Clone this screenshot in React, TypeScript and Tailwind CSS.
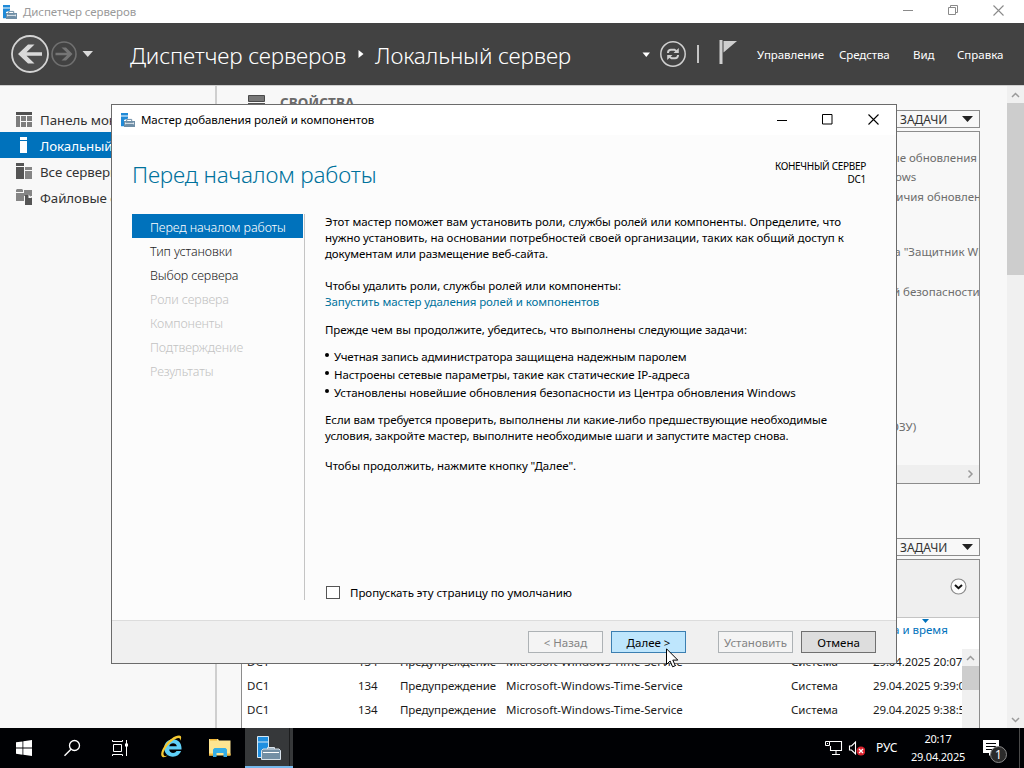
import type { ReactNode } from 'react';

const navItems = [
  { label: 'Перед началом работы', state: 'active' },
  { label: 'Тип установки', state: 'enabled' },
  { label: 'Выбор сервера', state: 'enabled' },
  { label: 'Роли сервера', state: 'disabled' },
  { label: 'Компоненты', state: 'disabled' },
  { label: 'Подтверждение', state: 'disabled' },
  { label: 'Результаты', state: 'disabled' },
];

const navStyles: Record<string, string> = {
  active: 'bg-[#0072bc] text-white',
  enabled: 'text-[#1e1e1e]',
  disabled: 'text-[#c2c2c2]',
};

const events = [
  { server: 'DC1', id: '134', level: 'Предупреждение', source: 'Microsoft-Windows-Time-Service', log: 'Система', date: '29.04.2025 20:07:05' },
  { server: 'DC1', id: '134', level: 'Предупреждение', source: 'Microsoft-Windows-Time-Service', log: 'Система', date: '29.04.2025 9:39:02' },
  { server: 'DC1', id: '134', level: 'Предупреждение', source: 'Microsoft-Windows-Time-Service', log: 'Система', date: '29.04.2025 9:38:54' },
];

// Server with a toolbox, 14x14
const ServerIcon = () => (
  <svg width="14" height="14" viewBox="0 0 14 14" className="shrink-0">
    <path d="M0 0h7v2.6H0zM0 3.6h7v2L3 7v6.3H0z" fill="#1f8ad8" />
    <path d="M3 8h11v6H3z" fill="#6f8ea6" />
    <path d="M5.7 8V6.4h5V8" fill="none" stroke="#6f8ea6" />
    <path d="M4 10.4h9" stroke="#e8eef3" strokeWidth="0.9" />
    <path d="M4.6 9.4v2M12.4 9.4v2" stroke="#e8eef3" strokeWidth="0.7" />
  </svg>
);

const DashboardIcon = () => (
  <svg width="16" height="15" viewBox="0 0 16 15" className="shrink-0">
    <path d="M0 0h16v3H0z" fill="#505050" />
    <path d="M0 4h4v11H0zM5 4h5v5H5zM11 4h5v5h-5zM5 10h5v5H5zM11 10h5v5h-5z" fill="#7d7d7d" />
  </svg>
);

const LocalServerIcon = () => (
  <svg width="16" height="16" viewBox="0 0 16 16" className="shrink-0">
    <path d="M4 0h7v3H4zM4 4h7v12H4z" fill="#fff" />
  </svg>
);

const AllServersIcon = () => (
  <svg width="16" height="16" viewBox="0 0 16 16" className="shrink-0">
    <path d="M0 0h8v3H0zM0 4h8v12H0z" fill="#555" />
    <path d="M9 4h7v3H9zM9 8h7v8H9z" fill="#858585" />
  </svg>
);

const FilesIcon = () => (
  <svg width="16" height="16" viewBox="0 0 16 16" className="shrink-0">
    <path d="M0 1l1-1h5l1 1v2H0zM0 4h8v8H0zM8 1h8v6h-8z" fill="#858585" />
    <path d="M9 6h4l3 3v7H9z" fill="#555" />
    <path d="M12.5 5.5l3.5 3.5h-3.5z" fill="#f8f8f8" />
  </svg>
);

const Caret = ({ className }: { className: string }) => (
  <svg width="11" height="6" viewBox="0 0 11 6" className={className}>
    <path d="M0 0h11L5.5 6z" fill="currentColor" />
  </svg>
);

const Chevron = ({ className }: { className: string }) => (
  <svg width="9" height="6" viewBox="0 0 9 6" className={className}>
    <path d="M1 5l3.5-3.5L8 5" fill="none" stroke="#9a9a9a" strokeWidth="1.5" />
  </svg>
);

const TasksButton = () => (
  <div className="flex h-[18px] w-[100px] items-center justify-between border border-[#8c8c8c] pl-[19px] pr-[6px] text-[12px] text-[#333]">
    <span className="pt-px leading-[16px]">ЗАДАЧИ</span>
    <Caret className="text-[#222]" />
  </div>
);

const CloseIcon = ({ color }: { color: string }) => (
  <svg width="11" height="11" viewBox="0 0 11 11">
    <path d="M0.5 0.5l10 10M10.5 0.5l-10 10" stroke={color} strokeWidth="1.1" />
  </svg>
);

type SideItemProps = { icon: ReactNode; label: string; active?: boolean };

const SideItem = ({ icon, label, active }: SideItemProps) => (
  <div className={`flex h-[26px] items-center gap-2 whitespace-nowrap pl-4 text-[13.3px] ${active ? 'bg-[#0072bc] text-white' : 'text-[#333]'}`}>
    {icon}
    <span className="pt-[3px] tracking-[-0.05px]">{label}</span>
  </div>
);

const TitleBar = () => (
  <div className="flex h-[23px] items-center bg-white text-[#9a9a9a]">
    <div className="pl-[3px]"><ServerIcon /></div>
    <span className="pl-[6px] pt-px text-[11.5px] tracking-[-0.1px]">Диспетчер серверов</span>
    <div className="ml-auto flex items-center pr-[20px] pb-[3px]">
      <svg width="10" height="10"><path d="M0 5.5h10" stroke="#8a8a8a" /></svg>
      <svg width="10" height="10" className="ml-[35px]">
        <path d="M0.5 2.5h7v7h-7zM2.5 2.5v-2h7v7h-2" fill="none" stroke="#8a8a8a" />
      </svg>
      <div className="ml-[35px]"><CloseIcon color="#8a8a8a" /></div>
    </div>
  </div>
);

const Header = () => (
  <div className="flex h-[62px] items-center bg-[#424242] text-white">
    <svg width="100" height="40" viewBox="0 0 100 40" className="shrink-0">
      <circle cx="30" cy="20" r="18" fill="#4d4d4d" stroke="#d4d4d4" strokeWidth="1.8" />
      <path d="M28 10.5h6.5l-8 7.7H42v3.6H26.500l8 7.7H28L18 20z" fill="#dadada" />
      <circle cx="64" cy="20" r="12" fill="none" stroke="#707070" strokeWidth="1.6" />
      <path d="M66 13.500h-4.500l5.500 5.200H55.500v2.600H67l-5.500 5.200H66l6.500-6.500z" fill="#757575" />
      <path d="M82.500 17h10.500l-5.250 6z" fill="#dadada" />
    </svg>
    <div className="flex items-center pl-[30px] text-[22.5px] font-light">
      <span className="w-[217px] whitespace-nowrap pt-[3px] tracking-[-0.15px]">Диспетчер серверов</span>
      <svg width="6" height="8" className="ml-[11px]"><path d="M0.500 0v8L5.500 4z" fill="#fff" /></svg>
      <span className="w-[197px] whitespace-nowrap pl-[11px] pt-[3px] tracking-[-0.15px]">Локальный сервер</span>
    </div>
    <svg width="110" height="40" viewBox="0 0 110 40" className="ml-auto shrink-0">
      <path d="M10.500 18.500h7.500l-3.700 4.500z" fill="#fff" />
      <circle cx="41" cy="20" r="12.200" fill="none" stroke="#cfcfcf" strokeWidth="1.500" />
      <path d="M36 19v-.5a3 3 0 0 1 3-2.700h3.500l2 1.500M46 21v.5a3 3 0 0 1-3 2.700h-3.500l-2-1.500" fill="none" stroke="#cfcfcf" strokeWidth="2" />
      <path d="M46.800 14v5h-5.300zM35.200 26v-5h5.300z" fill="#cfcfcf" />
      <path d="M65 11h2v18h-2z" fill="#c4c4c4" />
      <path d="M87.500 6h3v24h-3zM91.500 7H105l-13.500 11.500z" fill="#cfcfcf" />
    </svg>
    <div className="flex w-[282px] shrink-0 pl-[15px] pt-[2px] text-[11.5px]">
      <span className="w-[82px] tracking-[-0.05px]">Управление</span>
      <span className="w-[74px] tracking-[-0.1px]">Средства</span>
      <span className="w-[44px]">Вид</span>
      <span>Справка</span>
    </div>
  </div>
);

const PropertiesPanel = () => (
  <div className="h-[353px] overflow-hidden border border-[#8c8c8c]">
    <div className="h-[333px] whitespace-nowrap pl-[514px] pt-[16px] text-[11.5px] leading-[20px] text-[#6d6d6d]">
      <p>Последние установленные обновления</p>
      <p className="-mt-px pl-[3px]">Центр обновления Windows</p>
      <p>Последняя проверка наличия обновлений</p>
      <p className="mt-[35px]">Антивирусная программа "Защитник Windows"</p>
      <p className="mt-[20px]">Конфигурация усиленной безопасности Internet Explorer</p>
      <p className="mt-[115px]">Установленная память (ОЗУ)</p>
    </div>
    <div className="flex h-[18px] items-center justify-end bg-[#efefef] pr-[4px]">
      <Chevron className="rotate-90" />
    </div>
  </div>
);

const EventsPanel = () => (
  <div className="flex flex-1 flex-col overflow-hidden border-x border-t border-[#8c8c8c] bg-white">
    <div className="flex h-[58px] shrink-0 items-center justify-end border-b border-[#c4c4c4] bg-[#efefef] pr-[12px]">
      <svg width="17" height="17" viewBox="0 0 17 17" className="-mt-[5px]">
        <circle cx="8.500" cy="8.500" r="7.500" fill="#fdfdfd" stroke="#8a8a8a" strokeWidth="1.100" />
        <path d="M5 7l3.500 3.200L12 7" fill="none" stroke="#111" strokeWidth="2" />
      </svg>
    </div>
    <div className="relative h-[31px] shrink-0 pl-[631px] pt-[3px] text-[11.5px] leading-[17px] text-[#0072bc]">
      <Caret className="absolute left-[680px] top-px h-[4px] w-[7px]" />
      <span>Дата и время</span>
    </div>
    <div className="flex min-h-0 flex-1">
      <div className="flex-1 overflow-hidden pt-px text-[11.5px] leading-[24px] text-[#1a1a1a]">
        {events.map((e, i) => (
          <div key={i} className="flex whitespace-nowrap pl-[5px]">
            <span className="w-[111px] shrink-0">{e.server}</span>
            <span className="w-[42px] shrink-0 tracking-[-0.1px]">{e.id}</span>
            <span className="w-[106px] shrink-0 tracking-[-0.08px]">{e.level}</span>
            <span className="w-[285px] shrink-0 tracking-[0.04px]">{e.source}</span>
            <span className="w-[82px] shrink-0">{e.log}</span>
            <span className="tracking-[-0.13px]">{e.date}</span>
          </div>
        ))}
      </div>
      <div className="w-[17px] shrink-0 bg-[#f0f0f0]">
        <div className="flex h-[17px] items-center justify-center"><Chevron className="" /></div>
        <div className="h-[24px] bg-[#cdcdcd]" />
      </div>
    </div>
  </div>
);

const Background = () => (
  <div className="flex h-[643px] border-t border-[#cfcfcf] bg-[#f8f8f8]">
    <div className="w-[217px] shrink-0 border-r-2 border-[#cfcfcf] pt-[20px]">
      <SideItem icon={<DashboardIcon />} label="Панель мониторинга" />
      <SideItem icon={<LocalServerIcon />} label="Локальный сервер" active />
      <SideItem icon={<AllServersIcon />} label="Все серверы" />
      <SideItem icon={<FilesIcon />} label="Файловые службы" />
    </div>
    <div className="flex min-w-0 flex-1 flex-col overflow-hidden pl-[24px] pr-[27px]">
      <div className="flex h-[45px] shrink-0 justify-between">
        <div className="flex gap-[15px] pl-[7px] pt-[9px]">
          <svg width="17" height="16"><path d="M0.500 0.500h16v6h-16z" fill="#777" stroke="#4a4a4a" /><path d="M0 8h17v8H0z" fill="#555" /></svg>
          <span className="text-[13.5px] font-bold leading-[16px] tracking-[0.1px] text-[#6a6a6a]">СВОЙСТВА</span>
        </div>
        <div className="pt-[24px]"><TasksButton /></div>
      </div>
      <div className="shrink-0"><PropertiesPanel /></div>
      <div className="flex h-[75px] shrink-0 items-end justify-end pb-[3px]"><TasksButton /></div>
      <EventsPanel />
    </div>
    <div className="flex w-[17px] shrink-0 flex-col bg-[#f0f0f0]">
      <div className="flex h-[17px] items-center justify-center"><Chevron className="" /></div>
      <div className="h-[172px] bg-[#cdcdcd]" />
      <div className="mt-auto flex h-[17px] items-center justify-center"><Chevron className="rotate-180" /></div>
    </div>
  </div>
);

const Wizard = () => (
  <div className="absolute left-[111px] top-[104px] flex h-[560px] w-[786px] flex-col border border-[#6b6b6b] bg-[#fcfcfc] text-black">
    <div className="flex h-[30px] items-center bg-white pb-px pl-[9px]">
      <ServerIcon />
      <span className="pl-[6px] pt-px text-[11.5px] tracking-[-0.08px]">Мастер добавления ролей и компонентов</span>
      <div className="ml-auto flex items-center pr-[17px]">
        <svg width="10" height="10"><path d="M0 5.500h10" stroke="#000" /></svg>
        <svg width="11" height="11" className="ml-[35px]"><path d="M0.500 0.500h9.500v9.500h-9.500z" fill="none" stroke="#000" /></svg>
        <div className="ml-[35px]"><CloseIcon color="#000" /></div>
      </div>
    </div>

    <div className="flex h-[79px] justify-between pl-[20px] pr-[30px]">
      <h1 className="pt-[24px] text-[22.5px] font-light leading-[32px] tracking-[-0.17px] text-[#00729c]">Перед началом работы</h1>
      <div className="pt-[25px] text-right text-[10px] leading-[13px] tracking-[-0.3px]">
        <p>КОНЕЧНЫЙ СЕРВЕР</p>
        <p>DC1</p>
      </div>
    </div>

    <div className="flex h-[386px] pl-[20px]">
      <div className="w-[173px] border-r border-[#c4c4c4] pr-px">
        {navItems.map((item) => (
          <div key={item.label} className={`h-[24px] pl-[18px] pt-[2px] text-[12.5px] font-light leading-[24px] tracking-[-0.09px] ${navStyles[item.state]}`}>
            {item.label}
          </div>
        ))}
      </div>
      <div className="flex flex-1 flex-col whitespace-nowrap pl-[20px] text-[11.5px] leading-[16px] tracking-[-0.06px]">
        <p>
          Этот мастер поможет вам установить роли, службы ролей или компоненты. Определите, что<br />
          <span className="tracking-[-0.07px]">нужно установить, на основании потребностей своей организации, таких как общий доступ к</span><br />
          <span className="tracking-[-0.12px]">документам или размещение веб-сайта.</span>
        </p>
        <p className="mt-[16px]">Чтобы удалить роли, службы ролей или компоненты:</p>
        <p className="tracking-[-0.08px] text-[#00729c]">Запустить мастер удаления ролей и компонентов</p>
        <p className="mt-[12px] tracking-[-0.07px]">Прежде чем вы продолжите, убедитесь, что выполнены следующие задачи:</p>
        <ul className="mt-[10px] leading-[18px]">
          {[
            { text: 'Учетная запись администратора защищена надежным паролем', style: 'tracking-[-0.14px]' },
            { text: 'Настроены сетевые параметры, такие как статические IP-адреса', style: 'tracking-[-0.1px]' },
            { text: 'Установлены новейшие обновления безопасности из Центра обновления Windows', style: 'tracking-[-0.07px]' },
          ].map((task) => (
            <li key={task.text} className={`flex gap-[5px] ${task.style}`}>
              <span className="mt-[5px] h-[4px] w-[4px] rounded-full bg-black" />
              {task.text}
            </li>
          ))}
        </ul>
        <p className="mt-[10px] tracking-[-0.07px]">
          Если вам требуется проверить, выполнены ли какие-либо предшествующие необходимые<br />
          <span className="tracking-[-0.11px]">условия, закройте мастер, выполните необходимые шаги и запустите мастер снова.</span>
        </p>
        <p className="mt-[14px]">Чтобы продолжить, нажмите кнопку "Далее".</p>
        <label className="mb-px mt-auto flex items-center gap-[10px] pl-px leading-[13px] tracking-[-0.03px]">
          <span className="h-[13px] w-[14px] border border-[#555] bg-white" />
          Пропускать эту страницу по умолчанию
        </label>
      </div>
    </div>

    <div className="mt-auto flex h-[43px] justify-end border-t border-[#dcdcdc] bg-[#f0f0f0] pr-[20px] pt-[10px] text-center text-[11.5px] leading-[22px]">
      <button className="h-[22px] w-[75px] border border-[#adb2b5] bg-[#f4f4f4] text-[#838383]">&lt; Назад</button>
      <button className="ml-2 h-[22px] w-[75px] border border-[#3c7fb1] bg-[#bee6fd]">Далее &gt;</button>
      <button className="ml-8 h-[22px] w-[75px] border border-[#adb2b5] bg-[#f4f4f4] text-[#838383]">Установить</button>
      <button className="ml-2 h-[22px] w-[75px] border border-[#707070] bg-[#dddddd]">Отмена</button>
    </div>
  </div>
);

const Taskbar = () => (
  <div className="flex h-[40px] items-center bg-[#000104] text-white">
    <svg width="245" height="40" viewBox="0 0 245 40" className="shrink-0">
      <path d="M16 14.300l6.500-.9v6.200H16zM23.300 13.300l8.700-1.200v7.500h-8.700zM16 20.500h6.500v6.200l-6.500-.9zM23.300 20.500H32V28l-8.700-1.200z" fill="#fff" />
      <circle cx="74.500" cy="17.500" r="5" fill="none" stroke="#fff" strokeWidth="1.300" />
      <path d="M71 21.200l-6.500 6.500" stroke="#fff" strokeWidth="1.500" />
      <path d="M113.500 16.500h8v7h-8zM112.500 12v1.500h10V12M112.500 28v-1.500h10V28" fill="none" stroke="#fff" />
      <path d="M126.500 12v16" stroke="#fff" />
      <path d="M125 15.500h3v3h-3z" fill="#fff" />
      {/* Internet Explorer */}
      <path d="M181.500 21.500h-12.300c.2 4 5.800 4.600 7.300 1.500h4.600c-1.300 3.500-4.400 5.700-8.200 5.700-5 0-8.700-3.700-8.700-8.700s3.800-8.800 8.800-8.800 8.500 3.900 8.500 8.800zM176.800 18.300c-.3-4-7-4-7.500 0z" fill="#5fd0f7" fillRule="evenodd" />
      <path d="M162.500 29c-4.500-3.500 4-16.500 12.500-20.500 4-1.800 7-1.500 6 2-.2.800-.6 1.500-1 2.200.6-3-1.400-3.200-4.500-1.700-7 3.400-14 13.500-11.500 16.500 1 1 2.500.6 4-.2-2 1.600-4 2.500-5.500 1.700z" fill="#f6c932" />
      {/* File explorer */}
      <path d="M209 12.500v-1.500h9l1 1.500h11.500v15H209z" fill="#ffe591" />
      <path d="M210 11h7v1.500h-7zM209 25.500h4v2h-4zM227 25.500h3.500v2H227z" fill="#f2b83a" />
      <path d="M213 27v-5.500l1.500-1.500h11l1.500 1.500V29h-3.500v-4h-7v4H213z" fill="#36aee6" />
    </svg>
    <div className="flex h-full w-[48px] shrink-0 border-b-2 border-[#76b9ed] bg-[#36383a]">
      <svg width="44" height="38" viewBox="0 0 44 38">
        <path d="M12.500 8.500h11v21h-11zM12.500 14h11" fill="#1f8fe0" stroke="#d5e8f5" />
        <path d="M16.500 22.500l1.500-1.500h16l1.500 1.500v9h-19zM22.500 21v-1.500h7V21" fill="#738fa5" stroke="#d9e2ea" />
        <path d="M18 24.500h4M30 24.500h4M21 24.500h10" stroke="#fff" />
      </svg>
      <div className="w-px bg-[#1c1d1e]" />
    </div>
    <svg width="42" height="20" viewBox="0 0 42 20" className="ml-auto shrink-0">
      <path d="M6 3.500h12.500v9H7.500V8M13 13v3M9 16.500h8" fill="none" stroke="#fff" strokeWidth="1.100" />
      <path d="M2.500 3.500h4v4h-4z" fill="#000104" stroke="#fff" />
      <path d="M4 5h1v1H4z" fill="#fff" />
      <path d="M26.500 8h2l4-4v12l-4-4h-2z" fill="none" stroke="#fff" strokeWidth="1.100" />
      <circle cx="38" cy="13" r="4.500" fill="#d9232e" />
      <path d="M36 11l4 4M40 11l-4 4" stroke="#fff" strokeWidth="1.300" />
    </svg>
    <span className="w-[45px] shrink-0 pl-[11px] text-[12px] tracking-[-0.1px]">РУС</span>
    <div className="w-[56px] shrink-0 text-center text-[11px] leading-[18px] tracking-[-0.2px]">
      <p>20:17</p>
      <p>29.04.2025</p>
    </div>
    <div className="relative ml-[17px] h-full w-[36px] shrink-0">
      <svg width="24" height="36" viewBox="0 0 24 36">
        <path d="M0 12h16v13H9l-3 3v-3H0z" fill="#fff" />
        <path d="M3 15.500h10M3 18.500h10M3 21.500h6" stroke="#000104" />
      </svg>
      <span className="absolute left-[7px] top-[18px] h-[17px] w-[17px] rounded-full border border-[#8a8a8a] bg-[#2b2b2b] text-center text-[12px] leading-[16px]">1</span>
    </div>
    <div className="h-full w-[5px] shrink-0 border-l border-[#4a4a4a]" />
  </div>
);

export default function App() {
  return (
    <div className="relative h-[768px] w-[1024px] overflow-hidden font-['Noto_Sans','Open_Sans',sans-serif]">
      <TitleBar />
      <Header />
      <Background />
      <Taskbar />
      <Wizard />
      {/* Mouse pointer */}
      <svg width="14" height="20" viewBox="0 0 14 20" className="absolute left-[666px] top-[648px]">
        <path d="M0.500 0.800v15.700l3.600-3.500 2.500 5.800 2.700-1.100-2.500-5.600h5z" fill="#fff" stroke="#000" />
      </svg>
    </div>
  );
}
